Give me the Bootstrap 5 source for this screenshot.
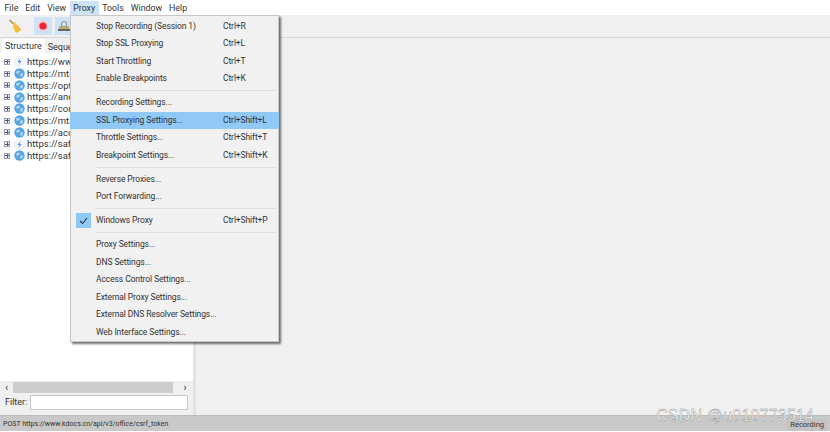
<!DOCTYPE html>
<html lang="en">
<head>
<meta charset="UTF-8">
<title>Charles - Proxy menu</title>
<link href="https://cdn.jsdelivr.net/npm/bootstrap@5.3.0/dist/css/bootstrap.min.css" rel="stylesheet">
<style>
html, body { height: 100%; }
body { background: #fff; font-family: Roboto, "Liberation Sans", sans-serif; font-size: 9px; color: #333; overflow: hidden; }
.app-win { position: relative; width: 830px; height: 432px; padding-top: 1px; }
.menu-strip { height: 14px; padding-left: 1px; font-size: 8.8px; }
.menu-top { width: auto; padding: 0 3.5px; line-height: 14px; }
.menu-top-on { background: #cde4f7; }
.tool-strip { height: 23px; background: #f0f0f0; border-bottom: 1px solid #d8d8d8; padding-left: 6px; }
.tool-btn { width: 18px; height: 18px; }
.tool-on { background: #cde4f7; }
.work-area { height: 377px; }
.left-pane { width: 193px; padding: 1px 0 3px; background: #f0f0f0; }
.tab-strip { height: 14px; padding-left: 2px; }
.tab-item { line-height: 13px; padding: 0 3px; }
.tab-on { background: #fff; height: 15px; padding-top: 1px; }
.tab-off { background: #f0f0f0; margin-top: 2px; height: 12px; }
.tree-box { flex: 1 1 auto; padding-top: 3px; overflow: hidden; background: #fff; }
.tree-row { height: 11.75px; padding-left: 4px; gap: 2px; line-height: 11.75px; white-space: nowrap; font-size: 9.5px; }
.tree-plus { width: 6px; height: 6px; border: 1px solid #9aa0b8; background: #eef; position: relative; flex: none; margin-right: 2px; }
.tree-plus::before { content: ""; position: absolute; left: 0; right: 0; top: 1.5px; height: 1px; background: #556; }
.tree-plus::after { content: ""; position: absolute; top: 0; bottom: 0; left: 1.5px; width: 1px; background: #556; }
.tree-globe { flex: none; }
.scroll-strip { height: 12px; background: #f0f0f0; color: #555; }
.scroll-thumb { flex: 1 1 auto; height: 11px; background: #cdcdcd; }
.scroll-arrow { width: 13px; text-align: center; line-height: 11px; font-size: 10px; font-weight: 700; }
.scroll-next { width: 20px; padding-left: 4px; }
.filter-strip { background: #f0f0f0; height: 19px; padding: 2px 5px; gap: 3px; }
.filter-box { flex: 1 1 auto; height: 15px; background: #fff; border: 1px solid #c8c8c8; }
.split-bar { width: 3px; background: #e3e3e3; }
.right-pane { flex: 1 1 auto; background: #f0f0f0; }
.status-strip { height: 16px; background: #c9c9c9; padding: 0 3px; font-size: 7px; line-height: 16px; border-top: 1px solid #bbb; }
.status-flag { margin-left: auto; background: #c3c3c3; padding: 0 3px; font-size: 7.5px; margin-top: 3px; line-height: 11px; }
.proxy-menu { position: absolute; left: 70px; top: 15px; width: 209px; height: 327px; background: #f1f1f1; border: 1px solid #c8c8c8; box-shadow: 2px 2px 2px rgba(0,0,0,.55); padding-top: 1.5px; font-size: 8.5px; letter-spacing: -.1px; }
.menu-line { height: 17.5px; line-height: 17.5px; padding-left: 25px; position: relative; }
.menu-line-on { background: #90c8f6; margin: 0 -1px; padding-left: 26px; }
.menu-key { position: absolute; left: 152px; top: 0; }
.menu-line-on .menu-key { left: 153px; }
.menu-sep { height: 1px; background: #dedede; margin: 2.75px 2px 2.75px 25px; }
.menu-check { position: absolute; left: 5px; top: 1px; width: 15px; height: 15px; background: #90c8f6; display: flex; align-items: center; justify-content: center; }
.mark-wm { position: absolute; left: 656px; top: 406px; font-family: "Liberation Sans", sans-serif; font-size: 16px; color: #fff; line-height: 20px; letter-spacing: .2px; -webkit-text-stroke: .4px #888; }
</style>
</head>
<body>
<div class="app-win d-flex flex-column">
  <div class="menu-strip d-flex">
    <div class="menu-top">File</div>
    <div class="menu-top">Edit</div>
    <div class="menu-top">View</div>
    <div class="menu-top menu-top-on">Proxy</div>
    <div class="menu-top">Tools</div>
    <div class="menu-top">Window</div>
    <div class="menu-top">Help</div>
  </div>
  <div class="tool-strip d-flex align-items-center">
    <div class="tool-btn d-flex align-items-center justify-content-center me-2">
      <svg width="15" height="15" viewBox="0 0 15 15"><path d="M1.5 1 L5 4.5" stroke="#b08c30" stroke-width="1.4"/><path d="M5 3 Q7 3 8 5 L13 10 Q14 11 12 12 L9 13.5 Q8 14 7 12.5 Q4.5 8 5 3Z" fill="#f4bb3c"/></svg>
    </div>
    <div class="tool-btn tool-on d-flex align-items-center justify-content-center" style="margin-left:2px">
      <svg width="12" height="12" viewBox="0 0 12 12"><circle cx="6" cy="6" r="5.5" fill="#f6c6cc"/><circle cx="6" cy="6" r="3.6" fill="#ee2338"/></svg>
    </div>
    <div class="tool-btn tool-on d-flex align-items-center justify-content-center" style="margin-left:3px">
      <svg width="14" height="14" viewBox="0 0 14 14"><path d="M4.5 7 V5 a2.5 2.5 0 0 1 5 0 V7" fill="none" stroke="#999" stroke-width="1.2"/><rect x="2" y="7" width="10" height="3" fill="#b8ab72"/><rect x="1" y="10" width="12" height="2" fill="#666"/></svg>
    </div>
  </div>
  <div class="work-area d-flex">
    <div class="left-pane d-flex flex-column">
      <div class="tab-strip d-flex">
        <div class="tab-item tab-on">Structure</div>
        <div class="tab-item tab-off">Sequence</div>
      </div>
      <div class="tree-box" id="tree"></div>
      <div class="scroll-strip d-flex align-items-center">
        <div class="scroll-arrow">&#8249;</div>
        <div class="scroll-thumb"></div>
        <div class="scroll-arrow scroll-next">&#8250;</div>
      </div>
      <div class="filter-strip d-flex align-items-center">
        <span>Filter:</span>
        <div class="filter-box"></div>
      </div>
    </div>
    <div class="split-bar"></div>
    <div class="right-pane"></div>
  </div>
  <div class="status-strip d-flex">
    <span>POST https://www.kdocs.cn/api/v3/office/csrf_token</span>
    <span class="status-flag">Recording</span>
  </div>

  <div class="proxy-menu" id="menu"></div>
  <div class="mark-wm">CSDN @u010773514</div>
</div>

<script src="https://cdn.jsdelivr.net/npm/bootstrap@5.3.0/dist/js/bootstrap.bundle.min.js"></script>
<script>
// tree rows
const hosts = [["www",1],["mta",0],["opti",0],["and",0],["cont",0],["mta",0],["acc",0],["safe",1],["safe",0]];
document.getElementById("tree").innerHTML = hosts.map(h => {
  const icon = h[1]
    ? '<svg class="tree-globe" width="11" height="11" viewBox="0 0 11 11"><circle cx="5.5" cy="5.5" r="5" fill="#f2f6fc" stroke="#dbe6f3" stroke-width=".6"/><path d="M6.5 2 L3.5 6 H5.3 L4.5 9 L7.5 5 H5.7Z" fill="#4a97e4"/></svg>'
    : '<svg class="tree-globe" width="11" height="11" viewBox="0 0 11 11"><circle cx="5.5" cy="5.5" r="5.2" fill="#58a6e6"/><path d="M2 4 Q4 2 6 3 L5 5 L3 6Z M6 6 L9 5 L8.5 8 L6.5 9Z" fill="#b6daf6"/></svg>';
  return `<div class="tree-row d-flex align-items-center"><span class="tree-plus"></span>${icon}<span>https://${h[0]}</span></div>`;
}).join("");

// proxy menu
const menu = [
  ["Stop Recording (Session 1)","Ctrl+R"],["Stop SSL Proxying","Ctrl+L"],["Start Throttling","Ctrl+T"],["Enable Breakpoints","Ctrl+K"],null,
  ["Recording Settings..."],["SSL Proxying Settings...","Ctrl+Shift+L","on"],["Throttle Settings...","Ctrl+Shift+T"],["Breakpoint Settings...","Ctrl+Shift+K"],null,
  ["Reverse Proxies..."],["Port Forwarding..."],null,
  ["Windows Proxy","Ctrl+Shift+P","check"],null,
  ["Proxy Settings..."],["DNS Settings..."],["Access Control Settings..."],["External Proxy Settings..."],["External DNS Resolver Settings..."],["Web Interface Settings..."]
];
document.getElementById("menu").innerHTML = menu.map(m => {
  if (!m) return '<div class="menu-sep"></div>';
  const check = m[2] === "check" ? '<span class="menu-check"><svg width="9" height="8" viewBox="0 0 9 8"><path d="M1 4 L3.5 6.5 L8 1" fill="none" stroke="#234" stroke-width="1.1"/></svg></span>' : "";
  const key = m[1] ? `<span class="menu-key">${m[1]}</span>` : "";
  return `<div class="menu-line${m[2] === "on" ? " menu-line-on" : ""}">${check}${m[0]}${key}</div>`;
}).join("");
</script>
</body>
</html>
